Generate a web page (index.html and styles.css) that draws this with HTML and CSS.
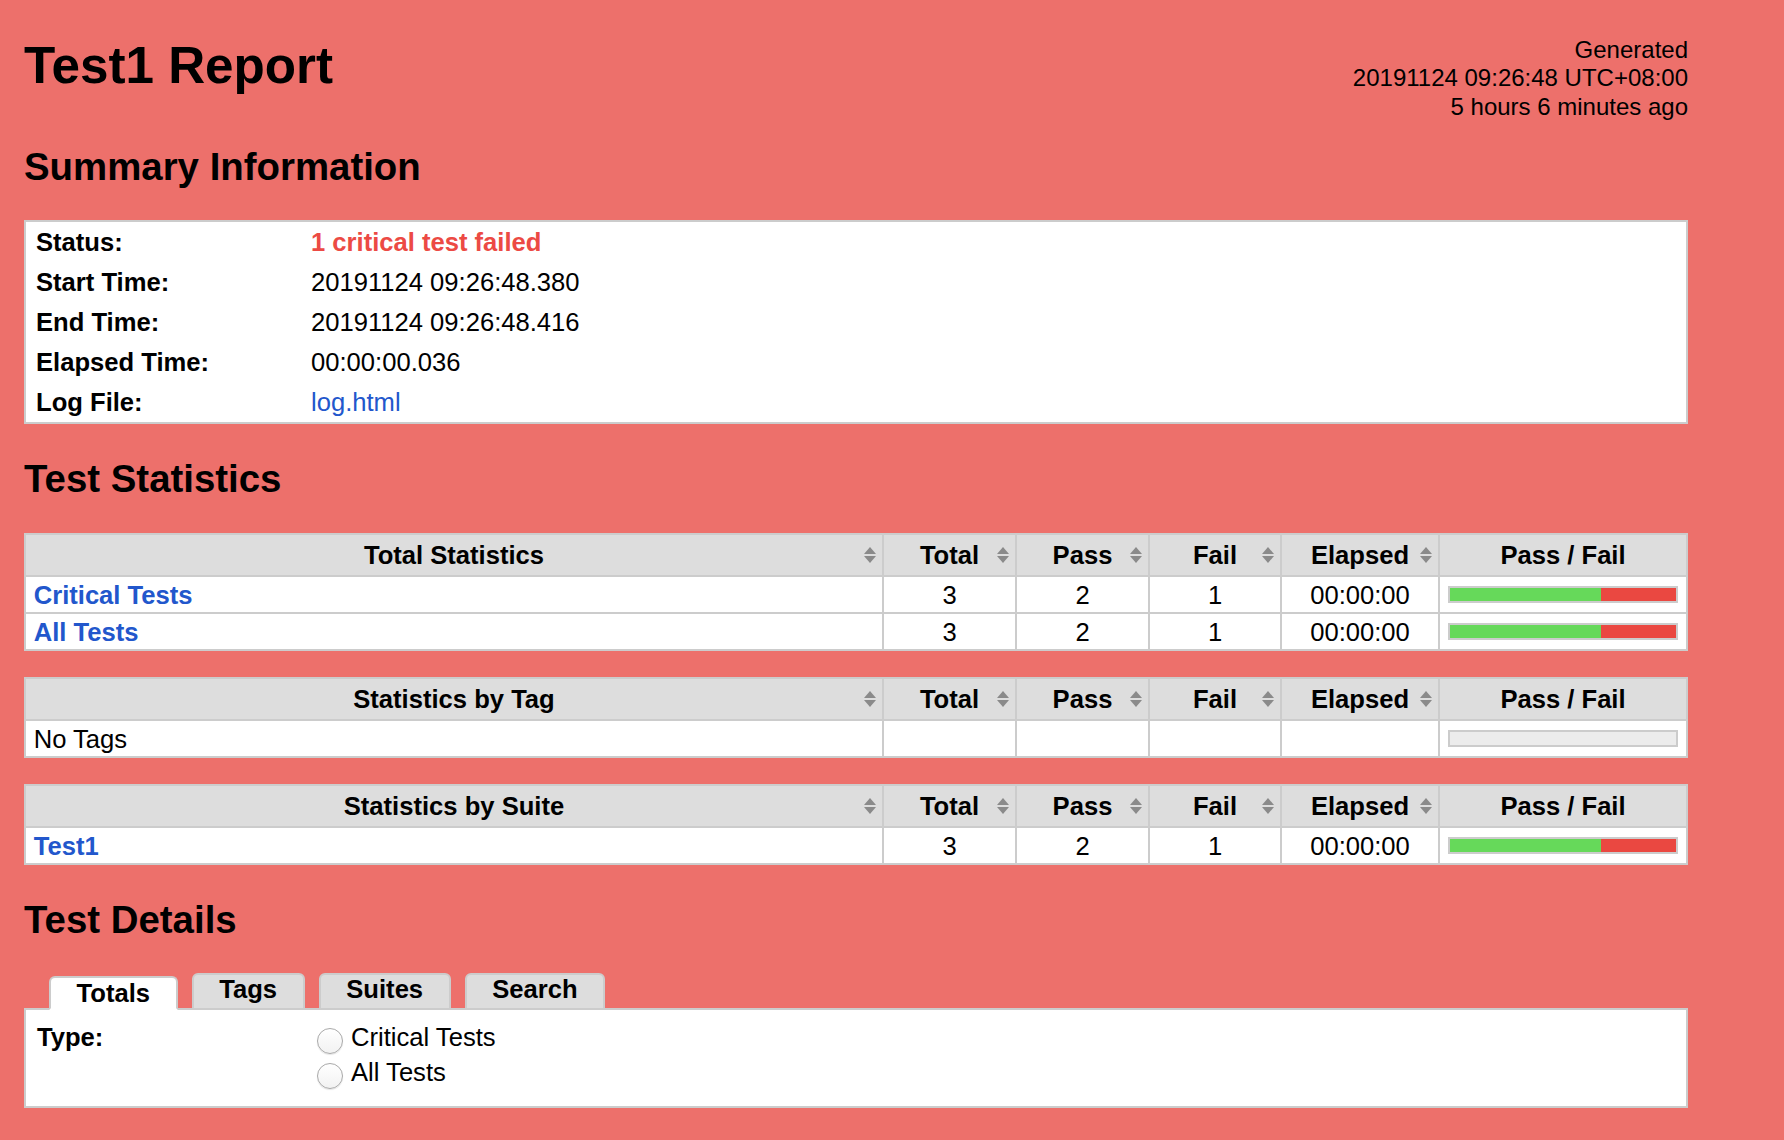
FILE: index.html
```html
<!DOCTYPE html>
<html lang="en">
<head>
<meta charset="utf-8">
<title>Test1 Report</title>
<link rel="stylesheet" href="styles.css">
</head>
<body>
<div class="page">
  <div class="header">
    <h1 class="title">Test1 Report</h1>
    <div class="generated">
      <div>Generated</div>
      <div>20191124 09:26:48 UTC+08:00</div>
      <div>5 hours 6 minutes ago</div>
    </div>
  </div>

  <h2 class="section-title">Summary Information</h2>
  <div class="summary">
    <div class="label">Status:</div><div class="value fail-text">1 critical test failed</div>
    <div class="label">Start Time:</div><div class="value">20191124 09:26:48.380</div>
    <div class="label">End Time:</div><div class="value">20191124 09:26:48.416</div>
    <div class="label">Elapsed Time:</div><div class="value">00:00:00.036</div>
    <div class="label">Log File:</div><div class="value"><a class="link" href="#">log.html</a></div>
  </div>

  <h2 class="section-title stats-title">Test Statistics</h2>
  <div class="stats">
    <div class="th sortable">Total Statistics</div>
    <div class="th sortable">Total</div>
    <div class="th sortable">Pass</div>
    <div class="th sortable">Fail</div>
    <div class="th sortable">Elapsed</div>
    <div class="th">Pass / Fail</div>

    <div class="td name"><a class="link bold" href="#">Critical Tests</a></div>
    <div class="td">3</div><div class="td">2</div><div class="td">1</div><div class="td">00:00:00</div>
    <div class="td graph-cell"><div class="graph"><div class="pass-bar" style="width:66.67%"></div><div class="fail-bar" style="width:33.33%"></div></div></div>

    <div class="td name"><a class="link bold" href="#">All Tests</a></div>
    <div class="td">3</div><div class="td">2</div><div class="td">1</div><div class="td">00:00:00</div>
    <div class="td graph-cell"><div class="graph"><div class="pass-bar" style="width:66.67%"></div><div class="fail-bar" style="width:33.33%"></div></div></div>
  </div>

  <div class="stats">
    <div class="th sortable">Statistics by Tag</div>
    <div class="th sortable">Total</div>
    <div class="th sortable">Pass</div>
    <div class="th sortable">Fail</div>
    <div class="th sortable">Elapsed</div>
    <div class="th">Pass / Fail</div>

    <div class="td name">No Tags</div>
    <div class="td"></div><div class="td"></div><div class="td"></div><div class="td"></div>
    <div class="td graph-cell"><div class="graph empty"></div></div>
  </div>

  <div class="stats">
    <div class="th sortable">Statistics by Suite</div>
    <div class="th sortable">Total</div>
    <div class="th sortable">Pass</div>
    <div class="th sortable">Fail</div>
    <div class="th sortable">Elapsed</div>
    <div class="th">Pass / Fail</div>

    <div class="td name"><a class="link bold" href="#">Test1</a></div>
    <div class="td">3</div><div class="td">2</div><div class="td">1</div><div class="td">00:00:00</div>
    <div class="td graph-cell"><div class="graph"><div class="pass-bar" style="width:66.67%"></div><div class="fail-bar" style="width:33.33%"></div></div></div>
  </div>

  <h2 class="section-title">Test Details</h2>
  <div class="tabs">
    <div class="tab active">Totals</div>
    <div class="tab">Tags</div>
    <div class="tab">Suites</div>
    <div class="tab">Search</div>
  </div>
  <div class="details">
    <div class="label">Type:</div>
    <div class="options">
      <label class="option"><input type="radio" name="type" class="radio"><span>Critical Tests</span></label>
      <label class="option"><input type="radio" name="type" class="radio"><span>All Tests</span></label>
    </div>
  </div>
</div>
</body>
</html>
```
FILE: styles.css
```css
* { box-sizing: border-box; }
html, body { margin: 0; padding: 0; }
body {
  background: #ED706B;
  font-family: "Liberation Sans", Arial, Helvetica, sans-serif;
  font-size: 25.6px;
  color: #000;
}
.page {
  width: 1688px;
  padding: 35px 0 40px 24px;
}
.header {
  display: flex;
  justify-content: space-between;
  align-items: flex-start;
  height: 77px;
}
.title {
  margin: 2px 0 0;
  font-size: 51.2px;
  line-height: 58.8px;
  font-weight: bold;
}
.generated {
  margin-top: 1px;
  text-align: right;
  font-size: 24px;
  line-height: 28.4px;
  white-space: nowrap;
}
.section-title {
  font-size: 38.4px;
  line-height: 44px;
  font-weight: bold;
  margin: 33px 0 31px;
}
.stats-title { margin-bottom: 32px; }
.link { color: #2257CC; text-decoration: none; }
.bold { font-weight: bold; }
.fail-text { color: #EC4A44; font-weight: bold; }

/* Summary */
.summary {
  display: grid;
  grid-template-columns: 280px 1fr;
  width: 1664px;
  border: 2px solid #ccc;
  background: #fff;
  margin-bottom: 33px;
}
.summary .label {
  font-weight: bold;
  padding: 5px 10px 5px;
  line-height: 30.1px;
}
.summary .value {
  padding: 5px 5px 5px;
  line-height: 30.1px;
}

/* Statistics */
.stats {
  display: grid;
  grid-template-columns: 856px 131px 131px 130px 156px 246px;
  gap: 2px;
  padding: 2px;
  width: 1664px;
  background: #ccc;
  margin-bottom: 26px;
}
.stats .th {
  position: relative;
  background: #ddd;
  font-weight: bold;
  text-align: center;
  padding: 5px 7.7px;
  line-height: 30px;
  white-space: nowrap;
}
.stats .td {
  background: #fff;
  text-align: center;
  padding: 2.5px 7.7px;
  line-height: 30px;
  min-height: 35px;
}
.stats .td.name { text-align: left; }
.sortable::before,
.sortable::after {
  content: "";
  position: absolute;
  right: 6px;
  width: 0;
  height: 0;
  border-left: 6.5px solid transparent;
  border-right: 6.5px solid transparent;
}
.sortable::before {
  top: 12px;
  border-bottom: 7px solid #8a8a8a;
}
.sortable::after {
  top: 21px;
  border-top: 7px solid #8a8a8a;
}
.stats .graph-cell {
  display: flex;
  align-items: center;
  padding: 0 7.7px;
}
.graph {
  display: flex;
  width: 100%;
  height: 17px;
  border: 2px solid #ccc;
  background: #ececec;
}
.pass-bar { height: 100%; background: #66D95A; }
.fail-bar { height: 100%; background: #EA4841; }

/* Tabs */
.tabs {
  position: relative;
  z-index: 1;
  display: flex;
  align-items: flex-end;
  gap: 14px;
  padding-left: 25px;
  margin-bottom: -2px;
}
.tab {
  height: 36.4px;
  padding: 0 25.6px;
  background: #ddd;
  border: 2px solid #ccc;
  border-radius: 6px 6px 0 0;
  font-weight: bold;
  line-height: 29.4px;
}
.tab.active {
  height: 34px;
  padding-top: 1px;
  background: #fff;
  border-bottom-color: #fff;
}
.details {
  display: grid;
  grid-template-columns: 280px 1fr;
  width: 1664px;
  border: 2px solid #ccc;
  background: #fff;
  padding: 12.8px 0;
}
.details .label {
  font-weight: bold;
  padding-left: 11px;
  line-height: 29.4px;
}
.options { display: flex; flex-direction: column; }
.option {
  display: flex;
  align-items: flex-start;
  height: 35.5px;
  line-height: 29.4px;
}
.radio {
  appearance: none;
  -webkit-appearance: none;
  width: 26px;
  height: 26px;
  margin: 5px 8px 0 11px;
  border-radius: 50%;
  border: 1.5px solid #a9a9a9;
  background: linear-gradient(#ffffff, #f2f2f2);
  box-shadow: 0 1px 1px rgba(0,0,0,0.1);
  flex: none;
}
```
